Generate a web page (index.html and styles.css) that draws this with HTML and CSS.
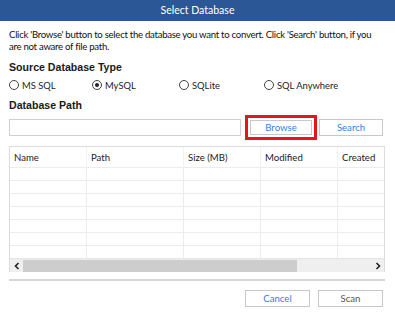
FILE: index.html
```html
<!DOCTYPE html>
<html lang="en">
<head>
    <meta charset="UTF-8">
    <title>Select Database</title>
    <link rel="stylesheet" href="styles.css">
</head>
<body>
<div class="dialog">
    <div class="titlebar">Select Database</div>
    <div class="content">
        <p class="intro">Click 'Browse' button to select the database you want to convert. Click 'Search' button, if you are not aware of file path.</p>

        <h3 class="section">Source Database Type</h3>
        <div class="radios">
            <label class="radio r1"><span class="dot"></span>MS SQL</label>
            <label class="radio r2"><span class="dot on"></span>MySQL</label>
            <label class="radio r3"><span class="dot"></span>SQLite</label>
            <label class="radio r4"><span class="dot"></span>SQL Anywhere</label>
        </div>

        <h3 class="section path-title">Database Path</h3>
        <div class="path-row">
            <input type="text" class="path-input">
            <div class="highlight"><button class="btn blue">Browse</button></div>
            <button class="btn blue">Search</button>
        </div>

        <div class="grid">
            <table>
                <thead>
                <tr>
                    <th class="c1">Name</th>
                    <th class="c2">Path</th>
                    <th class="c3">Size (MB)</th>
                    <th class="c4">Modified</th>
                    <th>Created</th>
                </tr>
                </thead>
                <tbody>
                <tr><td></td><td></td><td></td><td></td><td></td></tr>
                <tr><td></td><td></td><td></td><td></td><td></td></tr>
                <tr><td></td><td></td><td></td><td></td><td></td></tr>
                <tr><td></td><td></td><td></td><td></td><td></td></tr>
                <tr><td></td><td></td><td></td><td></td><td></td></tr>
                <tr><td></td><td></td><td></td><td></td><td></td></tr>
                <tr><td></td><td></td><td></td><td></td><td></td></tr>
                </tbody>
            </table>
            <div class="hscroll">
                <span class="arrow"><svg width="6" height="8" viewBox="0 0 6 8"><polyline points="4.5,1 1.5,4 4.5,7" fill="none" stroke="#222" stroke-width="1.6"/></svg></span>
                <div class="track"><div class="thumb"></div></div>
                <span class="arrow"><svg width="6" height="8" viewBox="0 0 6 8"><polyline points="1.5,1 4.5,4 1.5,7" fill="none" stroke="#222" stroke-width="1.6"/></svg></span>
            </div>
        </div>

        <div class="footer">
            <button class="btn blue">Cancel</button>
            <button class="btn gray">Scan</button>
        </div>
    </div>
</div>
</body>
</html>
```

FILE: styles.css
```css
body {
    margin: 0;
    background: #ffffff;
    font-family: Lato, "Noto Sans", sans-serif;
    color: #222;
}
.dialog {
    width: 395px;
    height: 312px;
    overflow: hidden;
}
.titlebar {
    height: 21px;
    line-height: 21px;
    background-color: #2b5797;
    color: #ffffff;
    text-align: center;
    font-size: 10.5px;
}
.content {
    padding: 0 10px 0 9px;
}
.intro {
    margin: 8px 0 0 0;
    font-size: 9.6px;
    line-height: 12px;
    letter-spacing: -0.28px;
    color: #111;
}
.section {
    margin: 7px 0 0 0;
    font-family: "Liberation Sans", Arial, sans-serif;
    font-size: 10.6px;
    font-weight: bold;
    line-height: 14px;
    color: #1a1a1a;
}
.radios {
    position: relative;
    height: 14px;
    margin-top: 4px;
    font-size: 9.4px;
}
.radio {
    position: absolute;
    top: 0;
    display: flex;
    align-items: center;
    gap: 3px;
    height: 14px;
    color: #222;
}
.r1 { left: 0; }
.r2 { left: 83px; }
.r3 { left: 170px; }
.r4 { left: 255px; }
.dot {
    width: 10px;
    height: 10px;
    border: 1px solid #444;
    border-radius: 50%;
    box-sizing: border-box;
    position: relative;
}
.dot.on::after {
    content: "";
    position: absolute;
    left: 2px;
    top: 2px;
    width: 4px;
    height: 4px;
    border-radius: 50%;
    background: #222;
}
.path-title {
    margin-top: 6px;
}
.path-row {
    display: flex;
    align-items: center;
    margin-top: 3px;
    height: 25px;
}
.path-input {
    width: 232px;
    height: 17px;
    box-sizing: border-box;
    border: 1px solid #d0d0d0;
    margin: 0;
    padding: 0;
}
.highlight {
    margin-left: 4px;
    border: 3px solid #e3151f;
    padding: 2px;
    height: 25px;
    box-sizing: border-box;
    display: flex;
}
.btn {
    width: 65px;
    height: 17px;
    box-sizing: border-box;
    border: 1px solid #c8c8c8;
    background: #ffffff;
    font-family: Lato, "Noto Sans", sans-serif;
    font-size: 9.6px;
    padding: 0;
    margin: 0;
}
.highlight .btn {
    height: 15px;
    width: 62px;
}
.path-row > .btn {
    margin-left: 2px;
    width: 64px;
}
.btn.blue { color: #2f7fe6; }
.btn.gray { color: #555; }

.grid {
    margin-top: 6px;
    width: 376px;
    border: 1px solid #dcdcdc;
    border-bottom: none;
    box-sizing: border-box;
}
table {
    width: 100%;
    border-collapse: collapse;
    table-layout: fixed;
}
th {
    height: 20px;
    padding: 0 0 0 4px;
    text-align: left;
    font-weight: normal;
    font-size: 9.6px;
    color: #222;
    border-left: 1px solid #f1f1f1;
    vertical-align: middle;
}
th:first-child, td:first-child { border-left: none; }
.c1 { width: 72px; }
.c2 { width: 92px; }
.c3 { width: 72px; }
.c4 { width: 72px; }
td {
    height: 12px;
    padding: 0;
    border-top: 1px solid #ececec;
    border-left: 1px solid #ececec;
}
.hscroll {
    display: flex;
    align-items: center;
    height: 13px;
    background: #efefef;
    border-top: 1px solid #e4e4e4;
}
.arrow {
    width: 13px;
    height: 12px;
    display: flex;
    align-items: center;
    justify-content: center;
}
.track {
    flex: 1;
    height: 12px;
}
.thumb {
    width: 274px;
    height: 12px;
    background: #cdcdcd;
}
.footer {
    margin-top: 7px;
    border-top: 2px solid #d6d6d6;
    width: 376px;
    display: flex;
    justify-content: flex-end;
    gap: 8px;
    padding-top: 9px;
    padding-right: 2px;
    box-sizing: border-box;
}
```
